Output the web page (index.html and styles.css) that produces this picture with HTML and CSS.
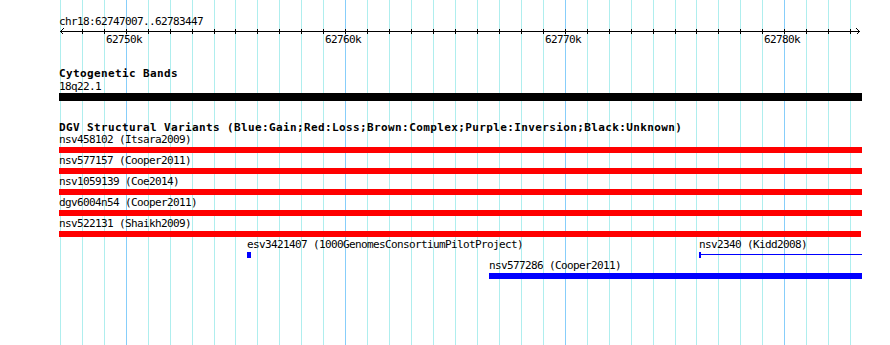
FILE: index.html
```html
<!DOCTYPE html>
<html lang="en">
<head>
    <meta charset="UTF-8">
    <title>chr18:62747007..62783447</title>
    <link rel="stylesheet" href="styles.css">
</head>
<body>
    <div class="browser">
        <!-- 1kb grid lines behind the tracks -->
        <svg class="grid" width="890" height="345" shape-rendering="crispEdges">
            <rect x="60" y="0" width="1" height="345"/>
            <rect x="82" y="0" width="1" height="345"/>
            <rect x="104" y="0" width="1" height="345"/>
            <rect class="major" x="126" y="0" width="1" height="345"/>
            <rect x="148" y="0" width="1" height="345"/>
            <rect x="170" y="0" width="1" height="345"/>
            <rect x="192" y="0" width="1" height="345"/>
            <rect x="214" y="0" width="1" height="345"/>
            <rect x="235" y="0" width="1" height="345"/>
            <rect x="257" y="0" width="1" height="345"/>
            <rect x="279" y="0" width="1" height="345"/>
            <rect x="301" y="0" width="1" height="345"/>
            <rect x="323" y="0" width="1" height="345"/>
            <rect class="major" x="345" y="0" width="1" height="345"/>
            <rect x="367" y="0" width="1" height="345"/>
            <rect x="389" y="0" width="1" height="345"/>
            <rect x="411" y="0" width="1" height="345"/>
            <rect x="433" y="0" width="1" height="345"/>
            <rect x="455" y="0" width="1" height="345"/>
            <rect x="477" y="0" width="1" height="345"/>
            <rect x="499" y="0" width="1" height="345"/>
            <rect x="521" y="0" width="1" height="345"/>
            <rect x="543" y="0" width="1" height="345"/>
            <rect class="major" x="565" y="0" width="1" height="345"/>
            <rect x="587" y="0" width="1" height="345"/>
            <rect x="609" y="0" width="1" height="345"/>
            <rect x="631" y="0" width="1" height="345"/>
            <rect x="653" y="0" width="1" height="345"/>
            <rect x="675" y="0" width="1" height="345"/>
            <rect x="696" y="0" width="1" height="345"/>
            <rect x="718" y="0" width="1" height="345"/>
            <rect x="740" y="0" width="1" height="345"/>
            <rect x="762" y="0" width="1" height="345"/>
            <rect class="major" x="784" y="0" width="1" height="345"/>
            <rect x="806" y="0" width="1" height="345"/>
            <rect x="828" y="0" width="1" height="345"/>
            <rect x="850" y="0" width="1" height="345"/>
        </svg>

        <div class="tracks">
            <div class="ruler">
                <div class="ruler-label">chr18:62747007..62783447</div>
                <svg class="ruler-axis" width="803" height="6" shape-rendering="crispEdges">
                    <rect x="1" y="3" width="800" height="1"/>
                    <rect x="23" y="1" width="1" height="5"/>
                    <rect x="45" y="1" width="1" height="5"/>
                    <rect x="67" y="1" width="1" height="5"/>
                    <rect x="89" y="1" width="1" height="5"/>
                    <rect x="111" y="1" width="1" height="5"/>
                    <rect x="133" y="1" width="1" height="5"/>
                    <rect x="155" y="1" width="1" height="5"/>
                    <rect x="176" y="1" width="1" height="5"/>
                    <rect x="198" y="1" width="1" height="5"/>
                    <rect x="220" y="1" width="1" height="5"/>
                    <rect x="242" y="1" width="1" height="5"/>
                    <rect x="264" y="1" width="1" height="5"/>
                    <rect x="286" y="1" width="1" height="5"/>
                    <rect x="308" y="1" width="1" height="5"/>
                    <rect x="330" y="1" width="1" height="5"/>
                    <rect x="352" y="1" width="1" height="5"/>
                    <rect x="374" y="1" width="1" height="5"/>
                    <rect x="396" y="1" width="1" height="5"/>
                    <rect x="418" y="1" width="1" height="5"/>
                    <rect x="440" y="1" width="1" height="5"/>
                    <rect x="462" y="1" width="1" height="5"/>
                    <rect x="484" y="1" width="1" height="5"/>
                    <rect x="506" y="1" width="1" height="5"/>
                    <rect x="528" y="1" width="1" height="5"/>
                    <rect x="550" y="1" width="1" height="5"/>
                    <rect x="572" y="1" width="1" height="5"/>
                    <rect x="594" y="1" width="1" height="5"/>
                    <rect x="616" y="1" width="1" height="5"/>
                    <rect x="637" y="1" width="1" height="5"/>
                    <rect x="659" y="1" width="1" height="5"/>
                    <rect x="681" y="1" width="1" height="5"/>
                    <rect x="703" y="1" width="1" height="5"/>
                    <rect x="725" y="1" width="1" height="5"/>
                    <rect x="747" y="1" width="1" height="5"/>
                    <rect x="769" y="1" width="1" height="5"/>
                    <rect x="791" y="1" width="1" height="5"/>
                    <polyline class="arrow" points="4.5,0.5 1.5,3.5 4.5,6.5"/>
                    <polyline class="arrow" points="797.5,0.5 800.5,3.5 797.5,6.5"/>
                </svg>
                <div class="ruler-ticks">
                    <span class="tick-label" style="left:47px">62750k</span>
                    <span class="tick-label" style="left:266px">62760k</span>
                    <span class="tick-label" style="left:486px">62770k</span>
                    <span class="tick-label" style="left:705px">62780k</span>
                </div>
            </div>

            <div class="track">
                <div class="track-title">Cytogenetic Bands</div>
                <div class="band-label">18q22.1</div>
                <div class="band"></div>
            </div>

            <div class="track">
                <div class="track-title">DGV Structural Variants (Blue:Gain;Red:Loss;Brown:Complex;Purple:Inversion;Black:Unknown)</div>
                <div class="feature-row">
                    <div class="feature" style="left:0;width:803px">
                        <div class="feature-label">nsv458102 (Itsara2009)</div>
                        <div class="glyph loss"></div>
                    </div>
                </div>
                <div class="feature-row">
                    <div class="feature" style="left:0;width:803px">
                        <div class="feature-label">nsv577157 (Cooper2011)</div>
                        <div class="glyph loss"></div>
                    </div>
                </div>
                <div class="feature-row">
                    <div class="feature" style="left:0;width:803px">
                        <div class="feature-label">nsv1059139 (Coe2014)</div>
                        <div class="glyph loss"></div>
                    </div>
                </div>
                <div class="feature-row">
                    <div class="feature" style="left:0;width:803px">
                        <div class="feature-label">dgv6004n54 (Cooper2011)</div>
                        <div class="glyph loss"></div>
                    </div>
                </div>
                <div class="feature-row">
                    <div class="feature" style="left:0;width:802px">
                        <div class="feature-label">nsv522131 (Shaikh2009)</div>
                        <div class="glyph loss"></div>
                    </div>
                </div>
                <div class="feature-row">
                    <div class="feature" style="left:188px;width:4px">
                        <div class="feature-label">esv3421407 (1000GenomesConsortiumPilotProject)</div>
                        <div class="glyph gain"></div>
                    </div>
                    <div class="feature" style="left:640px;width:163px">
                        <div class="feature-label">nsv2340 (Kidd2008)</div>
                        <div class="glyph gain-line"></div>
                    </div>
                </div>
                <div class="feature-row">
                    <div class="feature" style="left:430px;width:373px">
                        <div class="feature-label">nsv577286 (Cooper2011)</div>
                        <div class="glyph gain"></div>
                    </div>
                </div>
            </div>
        </div>
    </div>
</body>
</html>
```

FILE: styles.css
```css
* {
    margin: 0;
    padding: 0;
    box-sizing: border-box;
}

body {
    background: #fff;
}

.browser {
    position: relative;
    width: 890px;
    height: 345px;
    overflow: hidden;
    background: #fff;
    color: #000;
    font-family: "DejaVu Sans Mono", "Liberation Mono", monospace;
    font-size: 11px;
    line-height: 12px;
    letter-spacing: -0.62px;
}

.grid {
    position: absolute;
    top: 0;
    left: 0;
}

.grid rect {
    fill: #afeeee;
}

.grid .major {
    fill: #87cefa;
}

.tracks {
    position: relative;
    width: 862px;
    padding: 16px 0 0 59px;
}

/* ruler */
.ruler-label {
    height: 12px;
    white-space: nowrap;
}

.ruler-axis {
    display: block;
    overflow: visible;
}

.ruler-axis rect {
    fill: #000;
}

.ruler-axis .arrow {
    fill: none;
    stroke: #000;
    stroke-width: 1;
}

.ruler-ticks {
    position: relative;
    height: 12px;
}

.tick-label {
    position: absolute;
    top: 0;
    white-space: nowrap;
}

/* tracks */
.track {
    margin-top: 22px;
}

.track + .track {
    margin-top: 21px;
}

.track-title {
    height: 12px;
    font-weight: bold;
    letter-spacing: 0.38px;
    white-space: nowrap;
}

.band-label {
    height: 12px;
    margin-top: 1px;
}

.band {
    height: 8px;
    background: #000;
}

.feature-row {
    position: relative;
    height: 19px;
    margin-bottom: 2px;
}

.feature {
    position: absolute;
    top: 0;
}

.feature-label {
    height: 12px;
    margin-bottom: 1px;
    white-space: nowrap;
}

.glyph {
    height: 6px;
}

.loss {
    background: #f00;
}

.gain {
    background: #00f;
}

.gain-line {
    border-left: 2px solid #00f;
    background: linear-gradient(to bottom, transparent 2px, #00f 2px, #00f 3px, transparent 3px);
}
```
